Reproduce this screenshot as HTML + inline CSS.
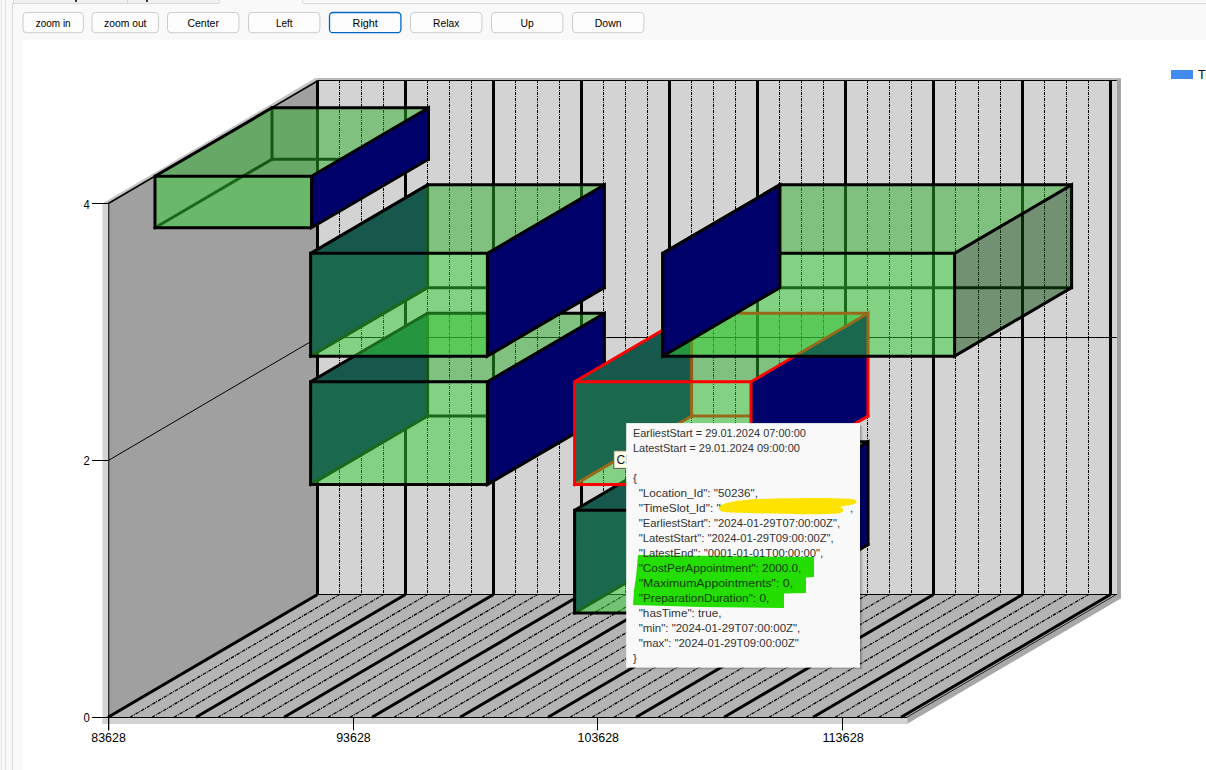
<!DOCTYPE html>
<html><head><meta charset="utf-8"><style>
html,body{margin:0;padding:0;width:1206px;height:770px;overflow:hidden;background:#f9f9f9;font-family:"Liberation Sans",sans-serif}
#root{position:absolute;left:0;top:0;width:1206px;height:770px}
.btn{position:absolute;top:12px;height:19px;border:1px solid #cfcfcf;border-radius:4px;background:#fdfdfd;font-size:11px;line-height:19px;text-align:center;color:#000;box-sizing:content-box}
.btn.sel{border-color:#1a73c8;border-width:1px;box-shadow:inset 0 0 0 0.5px #1a73c8}
svg{position:absolute;left:0;top:0}
.ax{font-size:13.6px;fill:#000}
.bt{font-size:11.5px;fill:#000}
.tt text{font-size:11.6px;fill:#333}
.tt text.hl{fill:#143c0c}
</style></head><body><div id="root">
<div style="position:absolute;left:1px;top:0;width:1px;height:770px;background:#e6e6e6"></div>
<div style="position:absolute;left:5px;top:0;width:1px;height:770px;background:#e0e0e0"></div>
<div style="position:absolute;left:12px;top:3px;width:1px;height:767px;background:#dadada"></div>
<div style="position:absolute;left:12px;top:3px;width:207px;height:1px;background:#dadada"></div>
<div style="position:absolute;left:303px;top:3px;width:903px;height:1px;background:#dadada"></div>
<div style="position:absolute;left:13px;top:0;width:205px;height:3px;background:#f0f0f0;border-left:1px solid #dadada;border-right:1px solid #dadada"></div>
<div style="position:absolute;left:302px;top:0;width:1px;height:3px;background:#dadada"></div>
<div style="position:absolute;left:75px;top:0;width:2px;height:2px;background:#333"></div>
<div style="position:absolute;left:146px;top:0;width:2px;height:2px;background:#333"></div>
<div style="position:absolute;left:127px;top:0;width:1px;height:3px;background:#dadada"></div>
<div style="position:absolute;left:22px;top:40px;width:1184px;height:730px;background:#fff"></div>
<svg width="1206" height="770" viewBox="0 0 1206 770">
<rect x="23.0" y="12.5" width="60.4" height="20.2" rx="3.5" fill="#fdfdfd" stroke="#cccccc" stroke-width="1"/>
<text x="35.7" y="26.9" textLength="35.0" lengthAdjust="spacingAndGlyphs" class="bt">zoom in</text>
<rect x="92.0" y="12.5" width="66.4" height="20.2" rx="3.5" fill="#fdfdfd" stroke="#cccccc" stroke-width="1"/>
<text x="104.0" y="26.9" textLength="42.5" lengthAdjust="spacingAndGlyphs" class="bt">zoom out</text>
<rect x="167.5" y="12.5" width="71.4" height="20.2" rx="3.5" fill="#fdfdfd" stroke="#cccccc" stroke-width="1"/>
<text x="187.4" y="26.9" textLength="31.5" lengthAdjust="spacingAndGlyphs" class="bt">Center</text>
<rect x="248.5" y="12.5" width="71.4" height="20.2" rx="3.5" fill="#fdfdfd" stroke="#cccccc" stroke-width="1"/>
<text x="275.9" y="26.9" textLength="16.6" lengthAdjust="spacingAndGlyphs" class="bt">Left</text>
<rect x="329.5" y="12.5" width="71.4" height="20.2" rx="3.5" fill="#fdfdfd" stroke="#0067c0" stroke-width="1.3"/>
<text x="352.6" y="26.9" textLength="25.2" lengthAdjust="spacingAndGlyphs" class="bt">Right</text>
<rect x="410.5" y="12.5" width="71.4" height="20.2" rx="3.5" fill="#fdfdfd" stroke="#cccccc" stroke-width="1"/>
<text x="433.1" y="26.9" textLength="26.2" lengthAdjust="spacingAndGlyphs" class="bt">Relax</text>
<rect x="491.5" y="12.5" width="71.4" height="20.2" rx="3.5" fill="#fdfdfd" stroke="#cccccc" stroke-width="1"/>
<text x="520.6" y="26.9" textLength="13.3" lengthAdjust="spacingAndGlyphs" class="bt">Up</text>
<rect x="572.5" y="12.5" width="71.4" height="20.2" rx="3.5" fill="#fdfdfd" stroke="#cccccc" stroke-width="1"/>
<text x="594.8" y="26.9" textLength="26.8" lengthAdjust="spacingAndGlyphs" class="bt">Down</text>
<polygon points="102.50,203.50 108.30,203.50 108.30,723.30 102.50,723.30" fill="#d3d3d3"/>
<polygon points="102.50,717.00 907.30,717.00 907.30,724.00 102.50,724.00" fill="#d3d3d3"/>
<polygon points="907.30,717.30 1116.80,594.50 1120.80,594.50 1120.80,598.50 907.30,723.80" fill="#a8a8a8"/>
<polygon points="315.80,78.00 1120.80,78.00 1120.80,598.50 1116.80,594.50 1116.80,80.70 317.80,80.70" fill="#b9b9b9"/>
<polygon points="1116.80,80.00 1120.80,79.00 1120.80,598.50 1116.80,594.50" fill="#a0a0a0"/>
<polygon points="101.50,204.00 315.30,78.00 317.80,80.70 108.30,203.50" fill="#c4c4c4"/>
<polygon points="317.80,80.70 1116.80,80.70 1116.80,594.50 317.80,594.50" fill="#d3d3d3"/>
<polygon points="108.30,203.50 317.80,80.70 317.80,594.50 108.30,717.30" fill="#a0a0a0"/>
<polygon points="108.30,717.30 907.30,717.30 1116.80,594.50 317.80,594.50" fill="#b4b4b4"/>
<line x1="317.50" y1="80.70" x2="317.50" y2="594.50" stroke="#000" stroke-width="3"/>
<line x1="339.50" y1="80.00" x2="339.50" y2="594.50" stroke="#000" stroke-width="1" stroke-dasharray="3 1 1 1"/>
<line x1="361.50" y1="80.00" x2="361.50" y2="594.50" stroke="#000" stroke-width="1" stroke-dasharray="3 1 1 1"/>
<line x1="383.50" y1="80.00" x2="383.50" y2="594.50" stroke="#000" stroke-width="1" stroke-dasharray="3 1 1 1"/>
<line x1="405.50" y1="80.70" x2="405.50" y2="594.50" stroke="#000" stroke-width="3"/>
<line x1="427.50" y1="80.00" x2="427.50" y2="594.50" stroke="#000" stroke-width="1" stroke-dasharray="3 1 1 1"/>
<line x1="449.50" y1="80.00" x2="449.50" y2="594.50" stroke="#000" stroke-width="1" stroke-dasharray="3 1 1 1"/>
<line x1="471.50" y1="80.00" x2="471.50" y2="594.50" stroke="#000" stroke-width="1" stroke-dasharray="3 1 1 1"/>
<line x1="493.50" y1="80.70" x2="493.50" y2="594.50" stroke="#000" stroke-width="3"/>
<line x1="515.50" y1="80.00" x2="515.50" y2="594.50" stroke="#000" stroke-width="1" stroke-dasharray="3 1 1 1"/>
<line x1="537.50" y1="80.00" x2="537.50" y2="594.50" stroke="#000" stroke-width="1" stroke-dasharray="3 1 1 1"/>
<line x1="559.50" y1="80.00" x2="559.50" y2="594.50" stroke="#000" stroke-width="1" stroke-dasharray="3 1 1 1"/>
<line x1="581.50" y1="80.70" x2="581.50" y2="594.50" stroke="#000" stroke-width="3"/>
<line x1="603.50" y1="80.00" x2="603.50" y2="594.50" stroke="#000" stroke-width="1" stroke-dasharray="3 1 1 1"/>
<line x1="625.50" y1="80.00" x2="625.50" y2="594.50" stroke="#000" stroke-width="1" stroke-dasharray="3 1 1 1"/>
<line x1="647.50" y1="80.00" x2="647.50" y2="594.50" stroke="#000" stroke-width="1" stroke-dasharray="3 1 1 1"/>
<line x1="669.50" y1="80.70" x2="669.50" y2="594.50" stroke="#000" stroke-width="3"/>
<line x1="691.50" y1="80.00" x2="691.50" y2="594.50" stroke="#000" stroke-width="1" stroke-dasharray="3 1 1 1"/>
<line x1="713.50" y1="80.00" x2="713.50" y2="594.50" stroke="#000" stroke-width="1" stroke-dasharray="3 1 1 1"/>
<line x1="735.50" y1="80.00" x2="735.50" y2="594.50" stroke="#000" stroke-width="1" stroke-dasharray="3 1 1 1"/>
<line x1="757.50" y1="80.70" x2="757.50" y2="594.50" stroke="#000" stroke-width="3"/>
<line x1="779.50" y1="80.00" x2="779.50" y2="594.50" stroke="#000" stroke-width="1" stroke-dasharray="3 1 1 1"/>
<line x1="801.50" y1="80.00" x2="801.50" y2="594.50" stroke="#000" stroke-width="1" stroke-dasharray="3 1 1 1"/>
<line x1="823.50" y1="80.00" x2="823.50" y2="594.50" stroke="#000" stroke-width="1" stroke-dasharray="3 1 1 1"/>
<line x1="845.50" y1="80.70" x2="845.50" y2="594.50" stroke="#000" stroke-width="3"/>
<line x1="867.50" y1="80.00" x2="867.50" y2="594.50" stroke="#000" stroke-width="1" stroke-dasharray="3 1 1 1"/>
<line x1="889.50" y1="80.00" x2="889.50" y2="594.50" stroke="#000" stroke-width="1" stroke-dasharray="3 1 1 1"/>
<line x1="911.50" y1="80.00" x2="911.50" y2="594.50" stroke="#000" stroke-width="1" stroke-dasharray="3 1 1 1"/>
<line x1="933.50" y1="80.70" x2="933.50" y2="594.50" stroke="#000" stroke-width="3"/>
<line x1="955.50" y1="80.00" x2="955.50" y2="594.50" stroke="#000" stroke-width="1" stroke-dasharray="3 1 1 1"/>
<line x1="978.50" y1="80.00" x2="978.50" y2="594.50" stroke="#000" stroke-width="1" stroke-dasharray="3 1 1 1"/>
<line x1="1000.50" y1="80.00" x2="1000.50" y2="594.50" stroke="#000" stroke-width="1" stroke-dasharray="3 1 1 1"/>
<line x1="1022.50" y1="80.70" x2="1022.50" y2="594.50" stroke="#000" stroke-width="3"/>
<line x1="1044.50" y1="80.00" x2="1044.50" y2="594.50" stroke="#000" stroke-width="1" stroke-dasharray="3 1 1 1"/>
<line x1="1066.50" y1="80.00" x2="1066.50" y2="594.50" stroke="#000" stroke-width="1" stroke-dasharray="3 1 1 1"/>
<line x1="1088.50" y1="80.00" x2="1088.50" y2="594.50" stroke="#000" stroke-width="1" stroke-dasharray="3 1 1 1"/>
<line x1="1110.50" y1="80.70" x2="1110.50" y2="594.50" stroke="#000" stroke-width="3"/>
<line x1="108.00" y1="717.30" x2="317.50" y2="594.50" stroke="#000" stroke-width="3"/>
<line x1="130.00" y1="717.30" x2="339.50" y2="594.50" stroke="#000" stroke-width="1.25" stroke-dasharray="3.5 1 1 1"/>
<line x1="152.00" y1="717.30" x2="361.50" y2="594.50" stroke="#000" stroke-width="1.25" stroke-dasharray="3.5 1 1 1"/>
<line x1="174.00" y1="717.30" x2="383.50" y2="594.50" stroke="#000" stroke-width="1.25" stroke-dasharray="3.5 1 1 1"/>
<line x1="196.00" y1="717.30" x2="405.50" y2="594.50" stroke="#000" stroke-width="3"/>
<line x1="218.00" y1="717.30" x2="427.50" y2="594.50" stroke="#000" stroke-width="1.25" stroke-dasharray="3.5 1 1 1"/>
<line x1="240.00" y1="717.30" x2="449.50" y2="594.50" stroke="#000" stroke-width="1.25" stroke-dasharray="3.5 1 1 1"/>
<line x1="262.00" y1="717.30" x2="471.50" y2="594.50" stroke="#000" stroke-width="1.25" stroke-dasharray="3.5 1 1 1"/>
<line x1="284.00" y1="717.30" x2="493.50" y2="594.50" stroke="#000" stroke-width="3"/>
<line x1="306.00" y1="717.30" x2="515.50" y2="594.50" stroke="#000" stroke-width="1.25" stroke-dasharray="3.5 1 1 1"/>
<line x1="328.00" y1="717.30" x2="537.50" y2="594.50" stroke="#000" stroke-width="1.25" stroke-dasharray="3.5 1 1 1"/>
<line x1="350.00" y1="717.30" x2="559.50" y2="594.50" stroke="#000" stroke-width="1.25" stroke-dasharray="3.5 1 1 1"/>
<line x1="372.00" y1="717.30" x2="581.50" y2="594.50" stroke="#000" stroke-width="3"/>
<line x1="394.00" y1="717.30" x2="603.50" y2="594.50" stroke="#000" stroke-width="1.25" stroke-dasharray="3.5 1 1 1"/>
<line x1="416.00" y1="717.30" x2="625.50" y2="594.50" stroke="#000" stroke-width="1.25" stroke-dasharray="3.5 1 1 1"/>
<line x1="438.00" y1="717.30" x2="647.50" y2="594.50" stroke="#000" stroke-width="1.25" stroke-dasharray="3.5 1 1 1"/>
<line x1="460.00" y1="717.30" x2="669.50" y2="594.50" stroke="#000" stroke-width="3"/>
<line x1="482.00" y1="717.30" x2="691.50" y2="594.50" stroke="#000" stroke-width="1.25" stroke-dasharray="3.5 1 1 1"/>
<line x1="504.00" y1="717.30" x2="713.50" y2="594.50" stroke="#000" stroke-width="1.25" stroke-dasharray="3.5 1 1 1"/>
<line x1="526.00" y1="717.30" x2="735.50" y2="594.50" stroke="#000" stroke-width="1.25" stroke-dasharray="3.5 1 1 1"/>
<line x1="548.00" y1="717.30" x2="757.50" y2="594.50" stroke="#000" stroke-width="3"/>
<line x1="570.00" y1="717.30" x2="779.50" y2="594.50" stroke="#000" stroke-width="1.25" stroke-dasharray="3.5 1 1 1"/>
<line x1="592.00" y1="717.30" x2="801.50" y2="594.50" stroke="#000" stroke-width="1.25" stroke-dasharray="3.5 1 1 1"/>
<line x1="614.00" y1="717.30" x2="823.50" y2="594.50" stroke="#000" stroke-width="1.25" stroke-dasharray="3.5 1 1 1"/>
<line x1="636.00" y1="717.30" x2="845.50" y2="594.50" stroke="#000" stroke-width="3"/>
<line x1="658.00" y1="717.30" x2="867.50" y2="594.50" stroke="#000" stroke-width="1.25" stroke-dasharray="3.5 1 1 1"/>
<line x1="680.00" y1="717.30" x2="889.50" y2="594.50" stroke="#000" stroke-width="1.25" stroke-dasharray="3.5 1 1 1"/>
<line x1="702.00" y1="717.30" x2="911.50" y2="594.50" stroke="#000" stroke-width="1.25" stroke-dasharray="3.5 1 1 1"/>
<line x1="724.00" y1="717.30" x2="933.50" y2="594.50" stroke="#000" stroke-width="3"/>
<line x1="746.00" y1="717.30" x2="955.50" y2="594.50" stroke="#000" stroke-width="1.25" stroke-dasharray="3.5 1 1 1"/>
<line x1="769.00" y1="717.30" x2="978.50" y2="594.50" stroke="#000" stroke-width="1.25" stroke-dasharray="3.5 1 1 1"/>
<line x1="791.00" y1="717.30" x2="1000.50" y2="594.50" stroke="#000" stroke-width="1.25" stroke-dasharray="3.5 1 1 1"/>
<line x1="813.00" y1="717.30" x2="1022.50" y2="594.50" stroke="#000" stroke-width="3"/>
<line x1="835.00" y1="717.30" x2="1044.50" y2="594.50" stroke="#000" stroke-width="1.25" stroke-dasharray="3.5 1 1 1"/>
<line x1="857.00" y1="717.30" x2="1066.50" y2="594.50" stroke="#000" stroke-width="1.25" stroke-dasharray="3.5 1 1 1"/>
<line x1="879.00" y1="717.30" x2="1088.50" y2="594.50" stroke="#000" stroke-width="1.25" stroke-dasharray="3.5 1 1 1"/>
<line x1="901.00" y1="717.30" x2="1110.50" y2="594.50" stroke="#000" stroke-width="3"/>
<line x1="317.80" y1="337.50" x2="1116.80" y2="337.50" stroke="#000" stroke-width="1"/>
<line x1="108.30" y1="460.50" x2="317.80" y2="337.50" stroke="#000" stroke-width="1"/>
<line x1="316.80" y1="80.50" x2="1116.80" y2="80.50" stroke="#000" stroke-width="1.2"/>
<line x1="108.30" y1="203.50" x2="317.80" y2="80.70" stroke="#000" stroke-width="1.6"/>
<line x1="108.80" y1="203.50" x2="108.80" y2="730.30" stroke="#000" stroke-width="1"/>
<line x1="92.00" y1="717.50" x2="907.30" y2="717.50" stroke="#000" stroke-width="1"/>
<line x1="906.80" y1="717.30" x2="1116.30" y2="594.50" stroke="#000" stroke-width="1" opacity="0.85"/>
<line x1="317.80" y1="594.50" x2="1116.80" y2="594.50" stroke="#000" stroke-width="1.2"/>
<line x1="92.00" y1="717.50" x2="108.30" y2="717.50" stroke="#000" stroke-width="1"/>
<text x="83.6" y="722.3" textLength="6.3" lengthAdjust="spacingAndGlyphs" class="ax">0</text>
<line x1="92.00" y1="460.50" x2="108.30" y2="460.50" stroke="#000" stroke-width="1"/>
<text x="83.6" y="465.4" textLength="6.3" lengthAdjust="spacingAndGlyphs" class="ax">2</text>
<line x1="92.00" y1="203.50" x2="108.30" y2="203.50" stroke="#000" stroke-width="1"/>
<text x="83.6" y="208.5" textLength="6.3" lengthAdjust="spacingAndGlyphs" class="ax">4</text>
<line x1="108.50" y1="717.30" x2="108.50" y2="730.30" stroke="#000" stroke-width="1"/>
<text x="91.3" y="742" textLength="34.5" lengthAdjust="spacingAndGlyphs" class="ax">83628</text>
<line x1="353.50" y1="717.30" x2="353.50" y2="730.30" stroke="#000" stroke-width="1"/>
<text x="336.2" y="742" textLength="34.5" lengthAdjust="spacingAndGlyphs" class="ax">93628</text>
<line x1="597.50" y1="717.30" x2="597.50" y2="730.30" stroke="#000" stroke-width="1"/>
<text x="577.6" y="742" textLength="41.4" lengthAdjust="spacingAndGlyphs" class="ax">103628</text>
<line x1="842.50" y1="717.30" x2="842.50" y2="730.30" stroke="#000" stroke-width="1"/>
<text x="822.4" y="742" textLength="41.4" lengthAdjust="spacingAndGlyphs" class="ax">113628</text>
<polygon points="310.60,381.82 427.60,313.32 427.60,416.08 310.60,484.58" fill="#00006a"/>
<line x1="427.60" y1="313.32" x2="427.60" y2="416.08" stroke="#000" stroke-width="3" stroke-linecap="square"/>
<line x1="427.60" y1="416.08" x2="604.40" y2="416.08" stroke="#000" stroke-width="3" stroke-linecap="square"/>
<line x1="310.60" y1="484.58" x2="427.60" y2="416.08" stroke="#000" stroke-width="3" stroke-linecap="square"/>
<polygon points="310.60,381.82 487.40,381.82 604.40,313.32 427.60,313.32" fill="rgba(45,176,45,0.5)"/>
<polygon points="310.60,381.82 487.40,381.82 487.40,484.58 310.60,484.58" fill="rgba(52,209,52,0.5)"/>
<polygon points="487.40,381.82 604.40,313.32 604.40,416.08 487.40,484.58" fill="#00006a"/>
<polyline points="487.40,484.58 310.60,484.58 310.60,381.82 487.40,381.82 487.40,484.58 604.40,416.08 604.40,313.32 487.40,381.82" fill="none" stroke="#000" stroke-width="3" stroke-linejoin="miter"/>
<polyline points="310.60,381.82 427.60,313.32 604.40,313.32" fill="none" stroke="#000" stroke-width="3" stroke-linejoin="miter"/>
<polygon points="310.60,253.37 427.60,184.87 427.60,287.63 310.60,356.13" fill="#00006a"/>
<line x1="427.60" y1="184.87" x2="427.60" y2="287.63" stroke="#000" stroke-width="3" stroke-linecap="square"/>
<line x1="427.60" y1="287.63" x2="604.40" y2="287.63" stroke="#000" stroke-width="3" stroke-linecap="square"/>
<line x1="310.60" y1="356.13" x2="427.60" y2="287.63" stroke="#000" stroke-width="3" stroke-linecap="square"/>
<polygon points="310.60,253.37 487.40,253.37 604.40,184.87 427.60,184.87" fill="rgba(45,176,45,0.5)"/>
<polygon points="310.60,253.37 487.40,253.37 487.40,356.13 310.60,356.13" fill="rgba(52,209,52,0.5)"/>
<polygon points="487.40,253.37 604.40,184.87 604.40,287.63 487.40,356.13" fill="#00006a"/>
<polyline points="487.40,356.13 310.60,356.13 310.60,253.37 487.40,253.37 487.40,356.13 604.40,287.63 604.40,184.87 487.40,253.37" fill="none" stroke="#000" stroke-width="3" stroke-linejoin="miter"/>
<polyline points="310.60,253.37 427.60,184.87 604.40,184.87" fill="none" stroke="#000" stroke-width="3" stroke-linejoin="miter"/>
<line x1="272.00" y1="107.80" x2="272.00" y2="159.18" stroke="#000" stroke-width="3" stroke-linecap="square"/>
<line x1="272.00" y1="159.18" x2="428.50" y2="159.18" stroke="#000" stroke-width="3" stroke-linecap="square"/>
<line x1="155.00" y1="227.68" x2="272.00" y2="159.18" stroke="#000" stroke-width="3" stroke-linecap="square"/>
<polygon points="155.00,176.30 311.50,176.30 428.50,107.80 272.00,107.80" fill="rgba(45,176,45,0.5)"/>
<polygon points="155.00,176.30 311.50,176.30 311.50,227.68 155.00,227.68" fill="rgba(52,209,52,0.5)"/>
<polygon points="311.50,176.30 428.50,107.80 428.50,159.18 311.50,227.68" fill="#00006a"/>
<polyline points="311.50,227.68 155.00,227.68 155.00,176.30 311.50,176.30 311.50,227.68 428.50,159.18 428.50,107.80 311.50,176.30" fill="none" stroke="#000" stroke-width="3" stroke-linejoin="miter"/>
<polyline points="155.00,176.30 272.00,107.80 428.50,107.80" fill="none" stroke="#000" stroke-width="3" stroke-linejoin="miter"/>
<polygon points="574.60,510.27 691.60,441.77 691.60,544.53 574.60,613.03" fill="#00006a"/>
<line x1="691.60" y1="441.77" x2="691.60" y2="544.53" stroke="#000" stroke-width="3" stroke-linecap="square"/>
<line x1="691.60" y1="544.53" x2="868.00" y2="544.53" stroke="#000" stroke-width="3" stroke-linecap="square"/>
<line x1="574.60" y1="613.03" x2="691.60" y2="544.53" stroke="#000" stroke-width="3" stroke-linecap="square"/>
<polygon points="574.60,510.27 751.00,510.27 868.00,441.77 691.60,441.77" fill="rgba(45,176,45,0.5)"/>
<polygon points="574.60,510.27 751.00,510.27 751.00,613.03 574.60,613.03" fill="rgba(52,209,52,0.5)"/>
<polygon points="751.00,510.27 868.00,441.77 868.00,544.53 751.00,613.03" fill="#00006a"/>
<polyline points="751.00,613.03 574.60,613.03 574.60,510.27 751.00,510.27 751.00,613.03 868.00,544.53 868.00,441.77 751.00,510.27" fill="none" stroke="#000" stroke-width="3" stroke-linejoin="miter"/>
<polyline points="574.60,510.27 691.60,441.77 868.00,441.77" fill="none" stroke="#000" stroke-width="3" stroke-linejoin="miter"/>
<polygon points="574.60,381.82 691.60,313.32 691.60,416.08 574.60,484.58" fill="#00006a"/>
<line x1="691.60" y1="313.32" x2="691.60" y2="416.08" stroke="#ff0000" stroke-width="3" stroke-linecap="square"/>
<line x1="691.60" y1="416.08" x2="868.00" y2="416.08" stroke="#ff0000" stroke-width="3" stroke-linecap="square"/>
<line x1="574.60" y1="484.58" x2="691.60" y2="416.08" stroke="#ff0000" stroke-width="3" stroke-linecap="square"/>
<polygon points="574.60,381.82 751.00,381.82 868.00,313.32 691.60,313.32" fill="rgba(45,176,45,0.5)"/>
<polygon points="574.60,381.82 751.00,381.82 751.00,484.58 574.60,484.58" fill="rgba(52,209,52,0.5)"/>
<polygon points="751.00,381.82 868.00,313.32 868.00,416.08 751.00,484.58" fill="#00006a"/>
<polyline points="751.00,484.58 574.60,484.58 574.60,381.82 751.00,381.82 751.00,484.58 868.00,416.08 868.00,313.32 751.00,381.82" fill="none" stroke="#ff0000" stroke-width="3" stroke-linejoin="miter"/>
<polyline points="574.60,381.82 691.60,313.32 868.00,313.32" fill="none" stroke="#ff0000" stroke-width="3" stroke-linejoin="miter"/>
<line x1="779.80" y1="184.87" x2="779.80" y2="287.63" stroke="#000" stroke-width="3" stroke-linecap="square"/>
<line x1="779.80" y1="287.63" x2="1071.60" y2="287.63" stroke="#000" stroke-width="3" stroke-linecap="square"/>
<line x1="662.80" y1="356.13" x2="779.80" y2="287.63" stroke="#000" stroke-width="3" stroke-linecap="square"/>
<polygon points="662.80,253.37 954.60,253.37 1071.60,184.87 779.80,184.87" fill="rgba(45,176,45,0.5)"/>
<polygon points="662.80,253.37 954.60,253.37 954.60,356.13 662.80,356.13" fill="rgba(52,209,52,0.5)"/>
<polygon points="954.60,253.37 1071.60,184.87 1071.60,287.63 954.60,356.13" fill="rgba(17,79,17,0.5)"/>
<polyline points="954.60,356.13 662.80,356.13 662.80,253.37 954.60,253.37 954.60,356.13 1071.60,287.63 1071.60,184.87 954.60,253.37" fill="none" stroke="#000" stroke-width="3" stroke-linejoin="miter"/>
<polyline points="662.80,253.37 779.80,184.87 1071.60,184.87" fill="none" stroke="#000" stroke-width="3" stroke-linejoin="miter"/>
<polygon points="662.80,253.37 779.80,184.87 779.80,287.63 662.80,356.13" fill="#00006a"/>
<polygon points="662.80,253.37 779.80,184.87 779.80,287.63 662.80,356.13" fill="none" stroke="#000" stroke-width="3"/>
<rect x="1171" y="70" width="22" height="9" fill="#418bf0"/>
<text x="1198" y="79" style="font-size:12.5px" fill="#000">Tr</text>
<g>
<rect x="613.8" y="450.8" width="20" height="17.6" fill="#ffffe1" stroke="#646464" stroke-width="1.1"/>
<text x="616.6" y="464" style="font-size:12px" fill="#101040">Cl</text>
</g>
<rect x="860" y="425" width="1" height="244" fill="#000" opacity="0.28"/>
<rect x="861" y="426" width="1" height="243" fill="#000" opacity="0.14"/>
<rect x="862" y="427" width="1" height="242" fill="#000" opacity="0.06"/>
<rect x="628" y="667.5" width="232" height="1" fill="#000" opacity="0.22"/>
<rect x="629" y="668.5" width="232" height="1" fill="#000" opacity="0.08"/>
<rect x="626.2" y="423.1" width="233.8" height="244.5" fill="#f9f9f9"/>
<path d="M638,555 L814,557 L814,577 L806,577.5 L806,593 L784,593.5 L784,608 L700,607 L633,605 L634,590 L636,577 Z" fill="#23de00"/>
<path d="M721,505 C730,501 750,499 775,498.5 C800,498 830,497.5 852,499 C858,500 858,503 853,504.5 C848,505.5 842,506 840,507 C845,509 845,512 838,513.5 C820,515 790,514 770,513.5 C745,513 728,513 722,511.5 C718,510 718,507 721,505 Z" fill="#ffe300"/>
<g class="tt">
<text x="632.9" y="436.6" textLength="173.0" lengthAdjust="spacingAndGlyphs">EarliestStart = 29.01.2024 07:00:00</text>
<text x="632.9" y="451.6" textLength="167.0" lengthAdjust="spacingAndGlyphs">LatestStart = 29.01.2024 09:00:00</text>
<text x="632.9" y="481.6">{</text>
<text x="638.7" y="496.6" textLength="119.2" lengthAdjust="spacingAndGlyphs">&quot;Location_Id&quot;: &quot;50236&quot;,</text>
<text x="638.7" y="511.6" textLength="82.0" lengthAdjust="spacingAndGlyphs">&quot;TimeSlot_Id&quot;: &quot;</text>
<text x="638.7" y="526.6" textLength="201.4" lengthAdjust="spacingAndGlyphs">&quot;EarliestStart&quot;: &quot;2024-01-29T07:00:00Z&quot;,</text>
<text x="638.7" y="541.6" textLength="195.0" lengthAdjust="spacingAndGlyphs">&quot;LatestStart&quot;: &quot;2024-01-29T09:00:00Z&quot;,</text>
<text x="638.7" y="556.6" textLength="184.5" lengthAdjust="spacingAndGlyphs">&quot;LatestEnd&quot;: &quot;0001-01-01T00:00:00&quot;,</text>
<text x="638.7" y="571.6" textLength="162.7" lengthAdjust="spacingAndGlyphs" class="hl">&quot;CostPerAppointment&quot;: 2000.0,</text>
<text x="638.7" y="586.6" textLength="154.4" lengthAdjust="spacingAndGlyphs" class="hl">&quot;MaximumAppointments&quot;: 0,</text>
<text x="638.7" y="601.6" textLength="130.6" lengthAdjust="spacingAndGlyphs" class="hl">&quot;PreparationDuration&quot;: 0,</text>
<text x="638.7" y="616.6" textLength="82.9" lengthAdjust="spacingAndGlyphs">&quot;hasTime&quot;: true,</text>
<text x="638.7" y="631.6" textLength="161.6" lengthAdjust="spacingAndGlyphs">&quot;min&quot;: &quot;2024-01-29T07:00:00Z&quot;,</text>
<text x="638.7" y="646.6" textLength="160.0" lengthAdjust="spacingAndGlyphs">&quot;max&quot;: &quot;2024-01-29T09:00:00Z&quot;</text>
<text x="632.9" y="661.6">}</text>
<text x="850" y="511.6">,</text>
</g>
</svg>
</div></body></html>
